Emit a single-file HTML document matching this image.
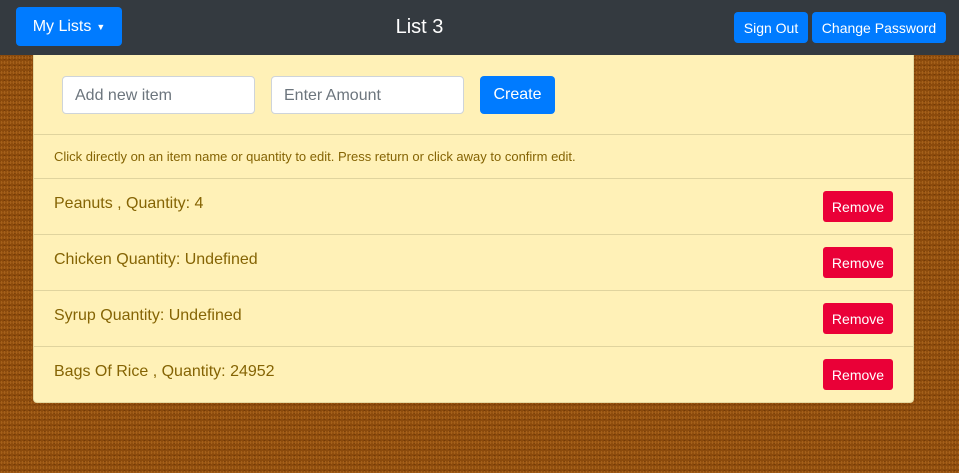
<!DOCTYPE html>
<html><head><style>
*{box-sizing:border-box;margin:0;padding:0}
body{width:959px;height:473px;overflow:hidden;font-family:"Liberation Sans",sans-serif;background:#8b4a0c;background-image:radial-gradient(#a5601a 0.8px,transparent 1px),radial-gradient(#733b07 0.8px,transparent 1px);background-size:3px 5px,5px 3px;background-position:0 0,2px 1px;position:relative}
.nav{position:absolute;left:0;top:0;width:959px;height:55px;background:#343a40}
.btn{position:absolute;background:#007bff;color:#fff;border-radius:4px;display:flex;align-items:center;justify-content:center}
.title{position:absolute;left:0;width:839px;text-align:center;top:16px;color:#fff;font-size:20px}
.card{position:absolute;left:33px;top:55px;width:881px;height:348px;background:#fff1b7;border:1px solid #e6d9a0;border-top:none;border-radius:0 0 4px 4px}
.inp{position:absolute;top:21px;width:193px;height:38px;background:#fff;border:1px solid #ced4da;border-radius:4px;color:#6c757d;font-size:16px;padding:10px 12px}
.row{position:absolute;left:0;width:879px;border-top:1px solid #e0d49e;color:#856404}
.rm{position:absolute;right:20px;top:12px;width:70px;height:31px;background:#ea0037;color:#fff;border-radius:3px;font-size:14px;display:flex;align-items:center;justify-content:center}
.row span{position:absolute;left:20px;top:16px;font-size:16px}
</style></head><body>
<div class="nav">
<div class="btn" style="left:16px;top:7px;width:106px;height:39px;font-size:16px">My Lists <span style="font-size:9px;margin-left:5px">▼</span></div>
<div class="title">List 3</div>
<div class="btn" style="left:734px;top:12px;width:74px;height:31px;font-size:14px">Sign Out</div>
<div class="btn" style="left:812px;top:12px;width:134px;height:31px;font-size:14px">Change Password</div>
</div>
<div class="card">
<div class="inp" style="left:28px">Add new item</div>
<div class="inp" style="left:237px">Enter Amount</div>
<div class="btn" style="left:446px;top:21px;width:75px;height:38px;font-size:16px">Create</div>
<div class="row" style="top:79px;height:44px"><span style="font-size:13px;top:14px">Click directly on an item name or quantity to edit. Press return or click away to confirm edit.</span></div>
<div class="row" style="top:123px;height:56px"><span>Peanuts , Quantity: 4</span><div class="rm">Remove</div></div>
<div class="row" style="top:179px;height:56px"><span>Chicken Quantity: Undefined</span><div class="rm">Remove</div></div>
<div class="row" style="top:235px;height:56px"><span>Syrup Quantity: Undefined</span><div class="rm">Remove</div></div>
<div class="row" style="top:291px;height:56px"><span>Bags Of Rice , Quantity: 24952</span><div class="rm">Remove</div></div>
</div>
</body></html>
